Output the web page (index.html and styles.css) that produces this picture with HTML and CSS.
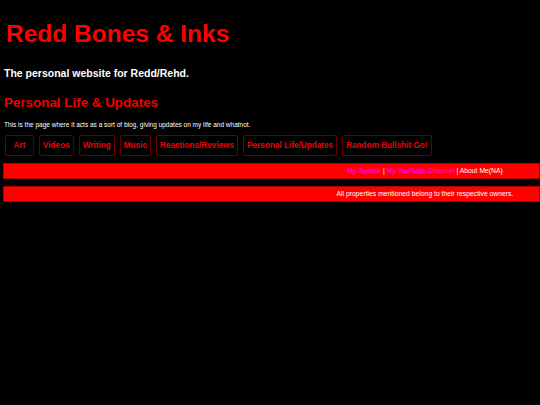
FILE: index.html
```html
<!DOCTYPE html>
<html lang="en">
<head>
<meta charset="utf-8">
<title>Redd Bones &amp; Inks</title>
<link rel="stylesheet" href="styles.css">
</head>
<body>
<h1 class="site-title">Redd Bones &amp; Inks</h1>
<p class="tagline">The personal website for Redd/Rehd.</p>
<h2 class="page-title">Personal Life &amp; Updates</h2>
<p class="intro">This is the page where it acts as a sort of blog, giving updates on my life and whatnot.</p>
<nav class="nav">
  <a class="nav-btn nav-btn-short" href="#">Art</a>
  <a class="nav-btn" href="#">Videos</a>
  <a class="nav-btn" href="#">Writing</a>
  <a class="nav-btn" href="#">Music</a>
  <a class="nav-btn" href="#">Reactions/Reviews</a>
  <a class="nav-btn" href="#">Personal Life/Updates</a>
  <a class="nav-btn" href="#">Random Bullshit Go!</a>
</nav>
<div class="bar bar-links"><a class="bar-link" href="#">My Tumblr</a> | <a class="bar-link" href="#">My YouTube Channel</a> | About Me(NA)</div>
<div class="bar bar-footer">All properties mentioned belong to their respective owners.</div>
</body>
</html>
```
FILE: styles.css
```css
html, body {
  background: #000;
}
body {
  margin: 0;
  padding: 0;
  font-family: "Liberation Sans", Arial, sans-serif;
  color: #fff;
}
.site-title {
  margin: 20px 0 0 6px;
  font-size: 24.5px;
  line-height: 28px;
  font-weight: bold;
  color: #f00;
}
.tagline {
  margin: 19px 0 0 4px;
  font-size: 10.5px;
  line-height: 13px;
  font-weight: bold;
  color: #fff;
}
.page-title {
  margin: 15px 0 0 4px;
  font-size: 13.4px;
  line-height: 16px;
  font-weight: bold;
  color: #e00;
}
.intro {
  margin: 9px 0 0 4px;
  font-size: 6.5px;
  line-height: 9px;
  color: #fff;
}
.nav {
  display: flex;
  gap: 5px;
  margin: 6px 0 0 5px;
}
.nav-btn {
  display: block;
  box-sizing: border-box;
  height: 21px;
  padding: 4px 3px;
  border: 1px solid #6a0000;
  border-radius: 2px;
  font-size: 8.2px;
  line-height: 11px;
  font-weight: bold;
  color: #e00;
  text-decoration: none;
  text-align: center;
  white-space: nowrap;
}
.nav-btn-short {
  min-width: 29px;
}
.bar {
  margin: 7px 0 0 3px;
  box-sizing: border-box;
  height: 16px;
  padding-left: 307px;
  border: 1px solid #b00000;
  background: #f00;
  font-size: 6.8px;
  line-height: 14px;
  text-align: center;
  color: #fff;
  white-space: nowrap;
}
.bar-links {
  margin-top: 7px;
}
.bar-footer {
  margin-top: 7px;
}
.bar-link {
  color: #ff00e0;
  font-weight: bold;
  text-decoration: none;
}
```
